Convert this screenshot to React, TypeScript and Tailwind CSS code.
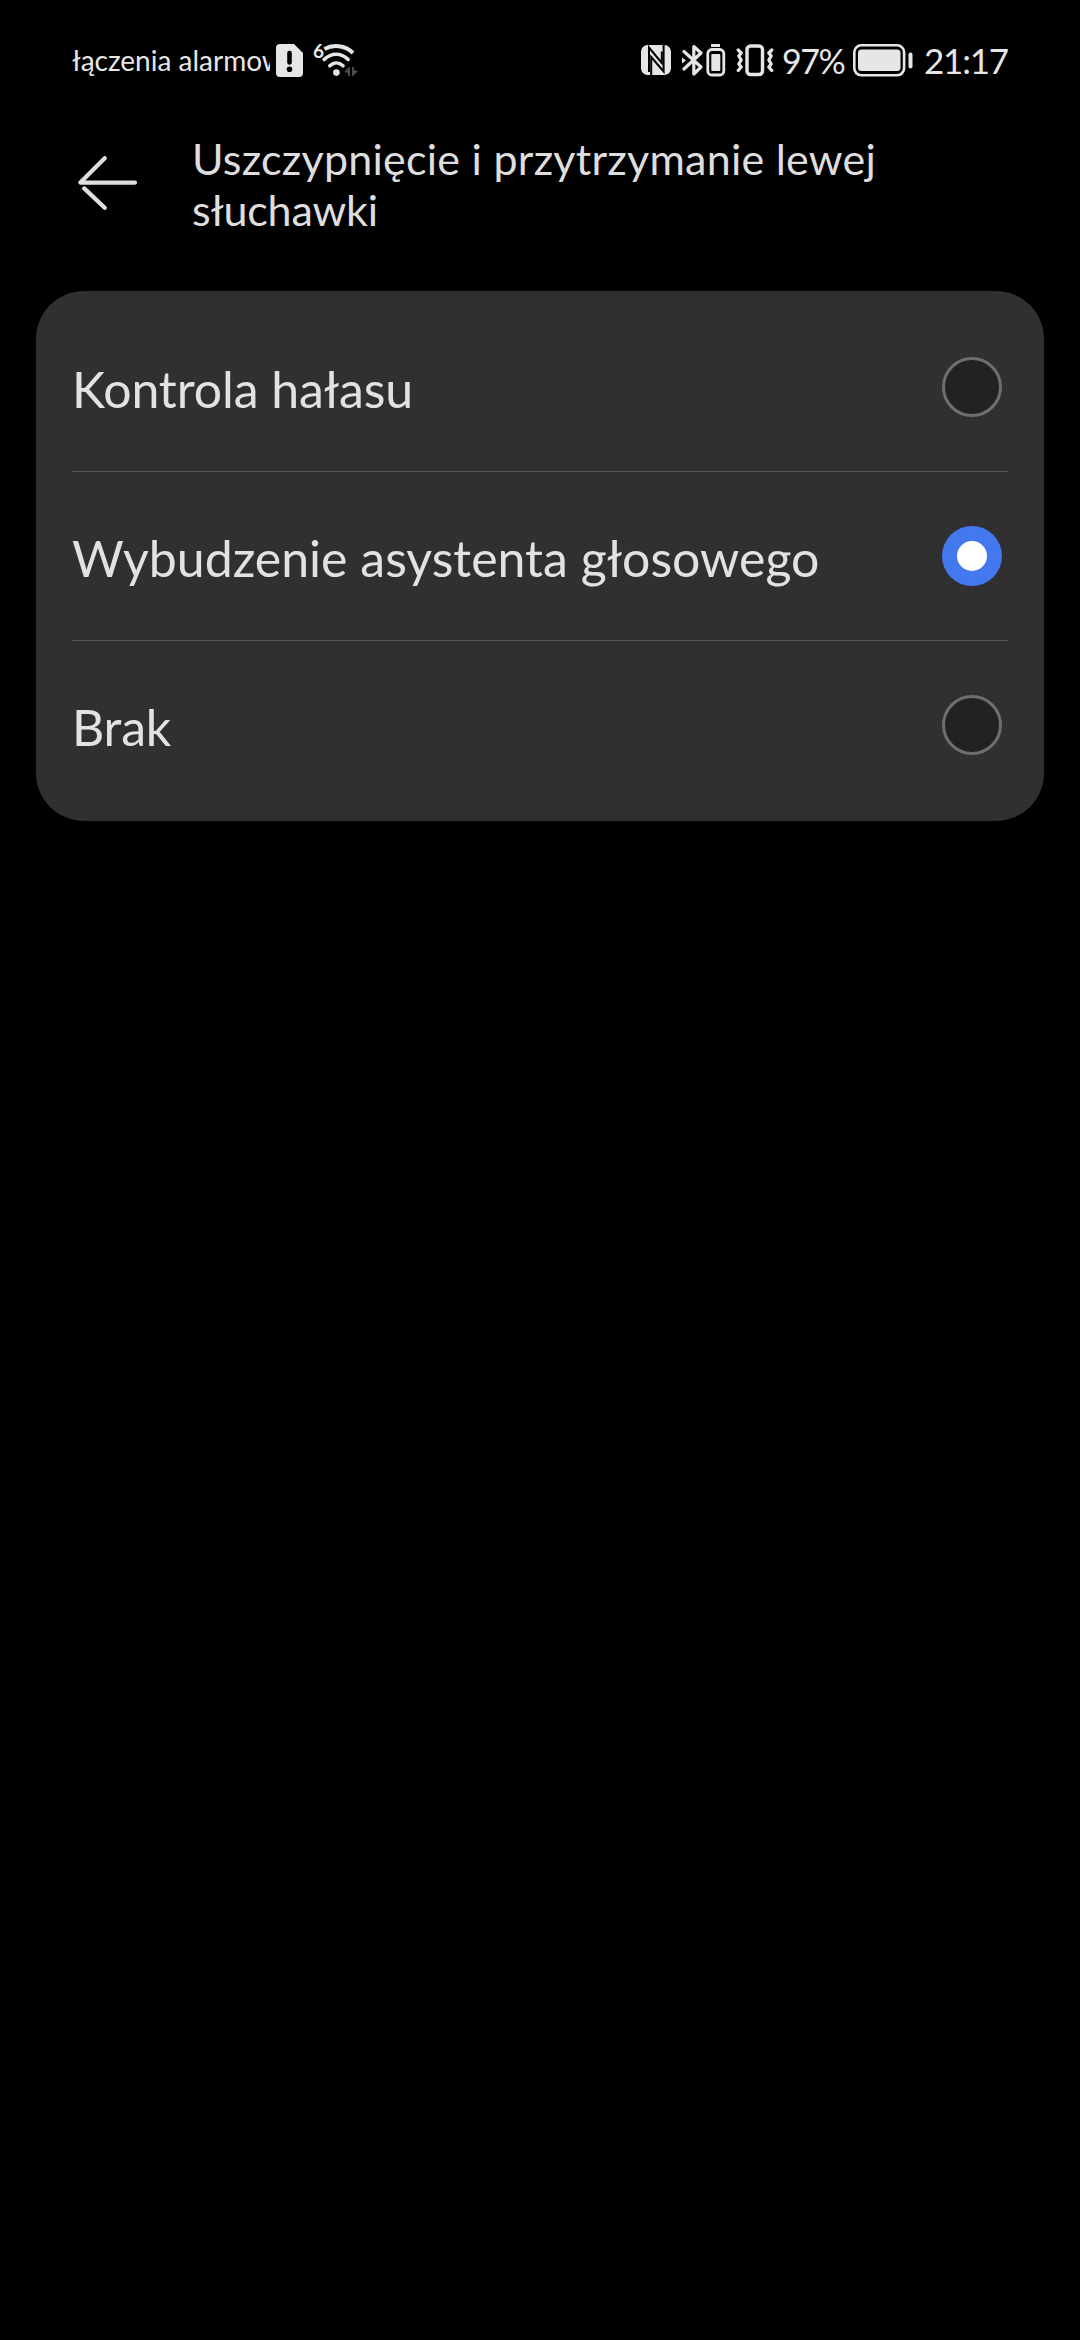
import React, { useState } from 'react';

const OPTIONS = [
  { id: 'noise', label: 'Kontrola hałasu', tracking: 'tracking-[-0.1px]' },
  { id: 'assistant', label: 'Wybudzenie asystenta głosowego', tracking: 'tracking-normal' },
  { id: 'none', label: 'Brak', tracking: 'tracking-[-0.2px]' },
];

const SimAlertIcon = () => (
  <svg viewBox="0 0 27 33" className="w-[27px] h-[33px] shrink-0">
    <path d="M4 0H18L27 9V29a4 4 0 0 1-4 4H4a4 4 0 0 1-4-4V4a4 4 0 0 1 4-4Z" fill="#e6e6e6" />
    <path d="M13.5 9V18.5" stroke="#000" strokeWidth="4.6" strokeLinecap="round" />
    <circle cx="13.5" cy="25.2" r="2.8" fill="#000" />
  </svg>
);

const WifiIcon = () => (
  <svg viewBox="0 0 36 33" className="w-9 h-[33px] shrink-0" fill="none" stroke="#e6e6e6" strokeWidth="4">
    <path d="M2.4 5C11 0.2 23 1 31 9" />
    <path d="M2.3 15.4C9.5 8.6 19 8.6 26 15.4" strokeLinecap="round" strokeWidth="3.6" />
    <path d="M7.8 21.8C11.8 18 17 18 21 21.8" strokeLinecap="round" strokeWidth="3.6" />
    <circle cx="14.4" cy="28.6" r="3.3" fill="#e6e6e6" stroke="none" />
    <path d="M28 23V32H26V29L22 28L27 23ZM30 32V23H32V26L36 27L31 32Z" fill="#4a4a4a" stroke="none" />
  </svg>
);

const NfcIcon = () => (
  <svg viewBox="0 0 30 30" className="w-[30px] h-[30px] shrink-0">
    <rect width="30" height="30" rx="6.5" fill="#e6e6e6" />
    <g fill="none" stroke="#000" strokeWidth="2">
      <path d="M8 27V2.5L20.8 18V6.5" />
      <path d="M10.2 30V12L22.6 26.5V0" />
    </g>
  </svg>
);

const BluetoothIcon = () => (
  <svg viewBox="0 0 45 33" className="w-[45px] h-[33px] shrink-0" fill="none" stroke="#e6e6e6">
    <path d="M2 7.5L19 23L11.8 30V2.5L19 9L2 25" strokeWidth="3.2" strokeLinejoin="round" strokeLinecap="round" />
    <path d="M0 13.5L4 16.5L0 19.5Z" fill="#e6e6e6" stroke="none" />
    <path d="M29 1.5H38" strokeWidth="3" />
    <rect x="25.8" y="5.5" width="16" height="25.5" rx="4" strokeWidth="2.8" />
    <rect x="29.3" y="10" width="9" height="17" rx="1" fill="#e6e6e6" stroke="none" />
  </svg>
);

const VibrateIcon = () => (
  <svg viewBox="0 0 38 33" className="w-[38px] h-[33px] shrink-0" fill="none" stroke="#e6e6e6">
    <rect x="11" y="2" width="15.5" height="28.5" rx="3.5" strokeWidth="3.4" />
    <g strokeWidth="3.2" strokeLinecap="round" strokeLinejoin="round">
      <path d="M2.2 6L5.2 9L2.8 12L5.2 16L2.8 20L5.2 23L2.2 26.5" />
      <path d="M35.8 6L32.8 9L35.2 12L32.8 16L35.2 20L32.8 23L35.8 26.5" />
    </g>
  </svg>
);

const BatteryIcon = () => (
  <svg viewBox="0 0 60 33" className="w-[60px] h-[33px] shrink-0">
    <rect x="1.3" y="1.3" width="49.8" height="30" rx="7" fill="none" stroke="#e6e6e6" strokeWidth="2.6" />
    <rect x="5" y="5.5" width="42.5" height="21.5" rx="3.5" fill="#e6e6e6" />
    <rect x="55.5" y="8.5" width="4" height="16" rx="2" fill="#e6e6e6" />
  </svg>
);

const StatusBar = () => (
  <div className="flex h-[120px] items-center pl-[72px] pr-[72px] text-[#e6e6e6]">
    <span className="w-[198px] overflow-hidden whitespace-nowrap text-[28px]">
      łączenia alarmowe
    </span>
    <div className="ml-1.5"><SimAlertIcon /></div>
    <span className="ml-2.5 mb-5 w-[9px] text-[19px] font-bold leading-none">6</span>
    <WifiIcon />
    <div className="ml-auto flex items-center">
      <NfcIcon />
      <div className="ml-[11px]"><BluetoothIcon /></div>
      <div className="ml-[9px]"><VibrateIcon /></div>
      <span className="ml-2 w-[71px] whitespace-nowrap text-[34px] tracking-[-1.5px]">97%</span>
      <BatteryIcon />
      <span className="ml-[11px] w-[84px] whitespace-nowrap text-[35px] tracking-[-1.2px]">21:17</span>
    </div>
  </div>
);

const Radio = ({ checked }: { checked: boolean }) => (
  <span
    className={`flex h-[60px] w-[60px] shrink-0 items-center justify-center rounded-full ${
      checked ? 'bg-[#4478ee]' : 'border-[3px] border-[#6e6e6e] bg-[#222222]'
    }`}
  >
    {checked && <span className="h-[30px] w-[30px] rounded-full bg-white" />}
  </span>
);

export default function App() {
  const [selected, setSelected] = useState('assistant');

  return (
    <div className="h-[2340px] w-[1080px] overflow-hidden bg-black font-['Lato','Noto_Sans',sans-serif]">
      <StatusBar />

      <header className="flex h-[171px] items-start pl-[78px] pt-[13px]">
        <button className="mt-[23px] shrink-0" aria-label="Wstecz">
          <svg viewBox="0 0 60 54" className="h-[54px] w-[60px]" fill="none" stroke="#dedede" strokeWidth="4.2" strokeLinecap="round">
            <path d="M26.7 2.2L2.4 26.6H57" strokeLinejoin="round" />
            <path d="M6.2 32.4L26.7 51.8" />
          </svg>
        </button>
        <h1 className="ml-[54px] w-[760px] text-[43px] leading-[51px] tracking-[0.25px] text-[#dedede]">
          Uszczypnięcie i przytrzymanie lewej <span className="tracking-[-0.2px]">słuchawki</span>
        </h1>
      </header>

      <main className="mx-9 rounded-[48px] bg-[#303030] px-9 py-3">
        {OPTIONS.map((opt, i) => (
          <div key={opt.id}>
            {i > 0 && <div className="h-px bg-[#565656]" />}
            <button
              className="flex h-[168px] w-full items-center justify-between pr-1.5 text-left"
              onClick={() => setSelected(opt.id)}
            >
              <span className={`pt-1 text-[50px] leading-none text-[#e2e2e2] ${opt.tracking}`}>{opt.label}</span>
              <Radio checked={selected === opt.id} />
            </button>
          </div>
        ))}
      </main>
    </div>
  );
}
